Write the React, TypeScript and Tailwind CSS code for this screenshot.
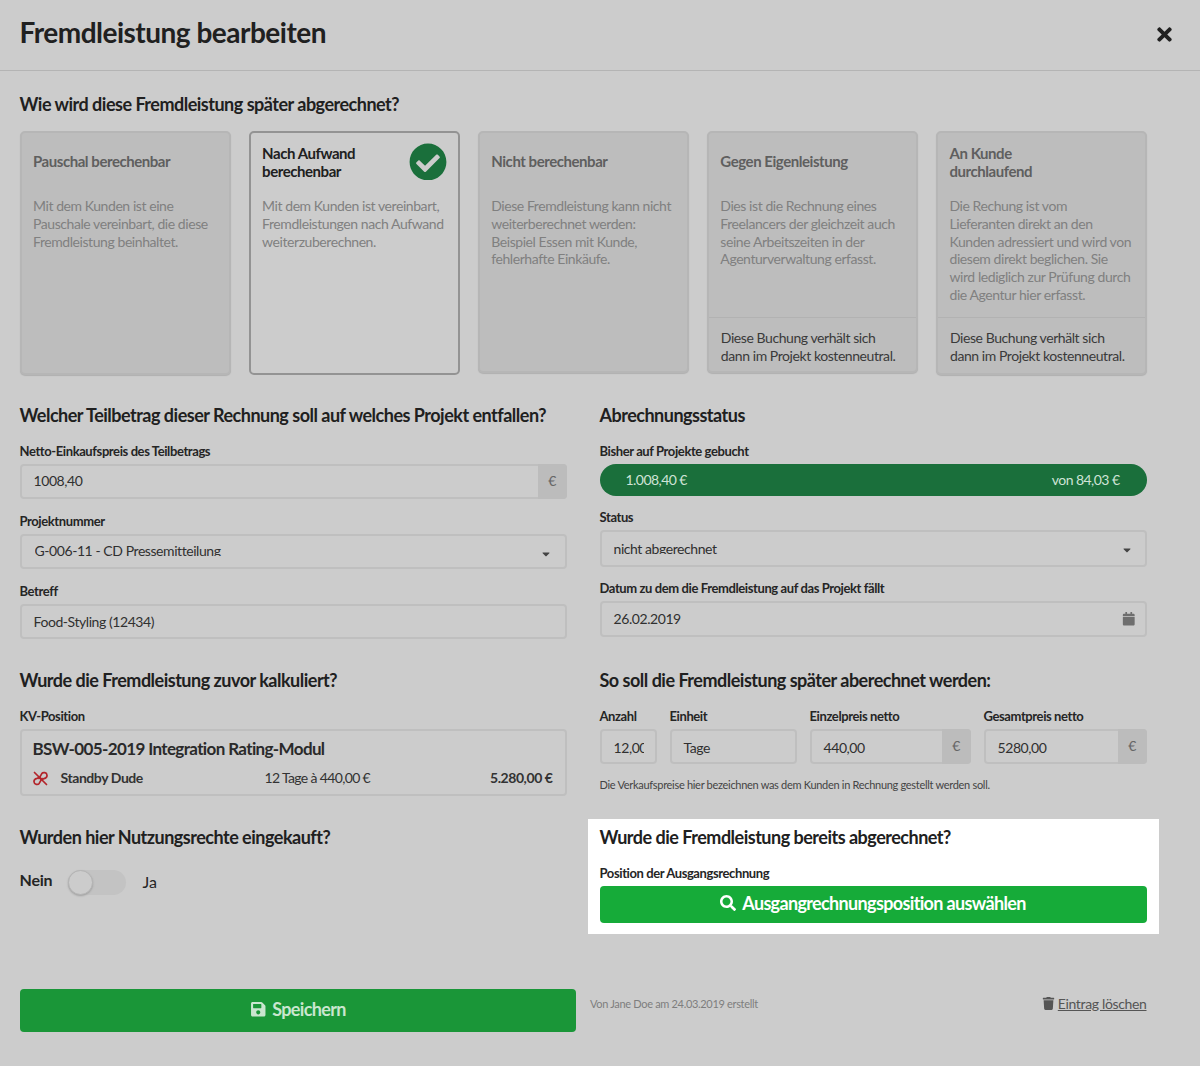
import React from "react";
import { FaCheckCircle, FaTimes, FaSearch, FaSave, FaTrash, FaCalendar, FaCaretDown } from "react-icons/fa";

const H = ({ children }: { children: React.ReactNode }) => (
  <h2 className="h-[24px] text-[18px] leading-[24px] font-bold text-[#202020] tracking-[-0.5px] whitespace-nowrap">{children}</h2>
);
const L = ({ children, className = "" }: { children: React.ReactNode; className?: string }) => (
  <div className={`h-[16px] text-[13px] leading-[16px] font-bold text-[#252525] tracking-[-0.4px] whitespace-nowrap ${className}`}>{children}</div>
);
const Field = ({ children, className = "" }: { children: React.ReactNode; className?: string }) => (
  <div className={`flex items-center rounded-[4px] border-2 border-[#bfbfbf] bg-[#cccccc] text-[14px] text-[#303030] tracking-[-0.43px] ${className}`}>{children}</div>
);
const Addon = () => (
  <div className="w-[29px] -my-[2px] -mr-[2px] self-stretch shrink-0 rounded-r-[4px] bg-[#bcbcbc] text-[#666] flex items-center justify-center text-[14px] h-[35px] pb-[2px]">€</div>
);
const BrokenLink = () => (
  <svg width="15" height="15" viewBox="0 0 15 15" fill="none" stroke="#b3252b" strokeWidth="1.7" strokeLinecap="round" className="shrink-0">
    <path d="M1.5 1.5 L13.5 13.5" />
    <path d="M6 7.5 L8.8 2.6 C10 0.9 13.8 1.2 14 4.2 C14.1 5.8 12.8 7.2 11 7.6 L8 8.8" />
    <path d="M9 7.5 L6.2 12.4 C5 14.1 1.2 13.8 1 10.8 C0.9 9.2 2.2 7.8 4 7.4 L7 6.2" />
  </svg>
);

type CardT = { t: string; d: string[]; f?: string[]; two?: boolean; active?: boolean; short?: boolean };
const cards: CardT[] = [
  { t: "Pauschal berechenbar", d: ["Mit dem Kunden ist eine", "Pauschale vereinbart, die diese", "Fremdleistung beinhaltet."] },
  { t: "Nach Aufwand\nberechenbar", two: true, active: true, d: ["Mit dem Kunden ist vereinbart,", "Fremdleistungen nach Aufwand", "weiterzuberechnen."] },
  { t: "Nicht berechenbar", short: true, d: ["Diese Fremdleistung kann nicht", "weiterberechnet werden:", "Beispiel Essen mit Kunde,", "fehlerhafte Einkäufe."] },
  { t: "Gegen Eigenleistung", short: true, d: ["Dies ist die Rechnung eines", "Freelancers der gleichzeit auch", "seine Arbeitszeiten in der", "Agenturverwaltung erfasst."], f: ["Diese Buchung verhält sich", "dann im Projekt kostenneutral."] },
  { t: "An Kunde\ndurchlaufend", two: true, d: ["Die Rechung ist vom", "Lieferanten direkt an den", "Kunden adressiert und wird von", "diesem direkt beglichen. Sie", "wird lediglich zur Prüfung durch", "die Agentur hier erfasst."], f: ["Diese Buchung verhält sich", "dann im Projekt kostenneutral."] },
];

function Card({ c }: { c: CardT }) {
  return (
    <div className={`relative rounded-[5px] border-2 flex flex-col tracking-[-0.43px] ${c.short ? "h-[242.5px]" : "h-[244px]"} ${c.active ? "bg-[#cccccc] border-[#939393]" : "bg-[#bdbdbd] border-[#b6b6b6] shadow-[0_1px_1px_#b0b0b0]"}`}>
      <div className="flex-1 pl-[11.5px] pt-[11.5px]">
        <div className={`h-[36px] flex items-center text-[15px] leading-[18px] font-bold whitespace-pre-line tracking-[-0.45px] ${c.two ? "" : "pb-[2px]"} ${c.active ? "text-[#202020]" : "text-[#5f5f5f]"}`}>{c.t}</div>
        <div className="mt-[17px] text-[14px] leading-[17.8px] text-[#808080]">
          {c.d.map((x) => <div key={x} className="whitespace-nowrap">{x}</div>)}
        </div>
      </div>
      {c.f && (
        <div className={`${c.short ? "h-[54.5px]" : "h-[56px]"} border-t border-[#b2b2b2] pl-[12px] pt-[11.5px] text-[14px] leading-[17.8px] text-[#3a3a3a] whitespace-nowrap`}>
          {c.f.map((x) => <div key={x}>{x}</div>)}
        </div>
      )}
      {c.active && (
        <div className="absolute left-[158px] top-[10.5px] w-[38px] h-[37px] overflow-hidden text-[#1a6f3b]">
          <FaCheckCircle size={38} />
        </div>
      )}
    </div>
  );
}

export default function App() {
  return (
    <div className="w-[1200px] h-[1066px] bg-[#cccccc] text-[#202020] overflow-hidden" style={{ fontFamily: "Lato, sans-serif" }}>
      <header className="h-[71px] border-b border-[#b4b4b4] flex items-center justify-between pl-[19.5px] pr-[25px] pb-[6px]">
        <h1 className="text-[28px] leading-[34px] font-bold text-[#202020] tracking-[-0.5px]">Fremdleistung bearbeiten</h1>
        <FaTimes size={21} className="text-[#202020] mt-[5px]" />
      </header>
      <div className="pl-[19.5px] pr-[53.5px]">
        <div className="pt-[21px]"><H>Wie wird diese Fremdleistung später abgerechnet?</H></div>
        <div className="mt-[14.5px] -mr-[1px] grid grid-cols-5 gap-x-[17.6px] items-start">
          {cards.map((c) => <Card key={c.t} c={c} />)}
        </div>

        <div className="mt-[28.5px] grid grid-cols-2 gap-x-[33px]">
          <div>
            <H>Welcher Teilbetrag dieser Rechnung soll auf welches Projekt entfallen?</H>
            <L className="mt-[16px]">Netto-Einkaufspreis des Teilbetrags</L>
            <Field className="mt-[5px] h-[35px] pl-[12px]"><span className="flex-1 mb-[2px]">1008,40</span><Addon /></Field>
            <L className="mt-[14px]">Projektnummer</L>
            <Field className="mt-[5px] h-[35px] pl-[13px] pr-[13px]">
              <span className="flex-1 h-[14px] mb-[5px] leading-[18px] overflow-hidden">G-006-11 - CD Pressemitteilung</span>
              <FaCaretDown size={12} className="text-[#444] mt-[4px]" />
            </Field>
            <L className="mt-[14px]">Betreff</L>
            <Field className="mt-[5px] h-[35px] pl-[12px]"><span>Food-Styling (12434)</span></Field>
          </div>
          <div>
            <H>Abrechnungsstatus</H>
            <L className="mt-[16px]">Bisher auf Projekte gebucht</L>
            <div className="mt-[5px] h-[32px] pb-[2px] rounded-full bg-[#1a6f3b] flex items-center justify-between pl-[26px] pr-[27px] text-[14px] text-[#cfe3d6] tracking-[-0.55px]">
              <span>1.008,40 €</span><span>von 84,03 €</span>
            </div>
            <L className="mt-[13px]">Status</L>
            <Field className="mt-[5px] h-[37px] pl-[12px] pr-[12px]">
              <span className="flex-1 h-[14px] mb-[4px] leading-[18px] overflow-hidden">nicht abgerechnet</span>
              <FaCaretDown size={12} className="text-[#444] mt-[3px]" />
            </Field>
            <L className="mt-[13px]">Datum zu dem die Fremdleistung auf das Projekt fällt</L>
            <Field className="mt-[5px] h-[36px] pl-[12px] pr-[9.5px]">
              <span className="flex-1 mb-[2px]">26.02.2019</span>
              <FaCalendar size={13.5} className="text-[#6e6e6e]" />
            </Field>
          </div>
        </div>

        <div className="mt-[29px] grid grid-cols-2 gap-x-[33px]">
          <div>
            <H>Wurde die Fremdleistung zuvor kalkuliert?</H>
            <L className="mt-[16px]">KV-Position</L>
            <div className="mt-[5px] h-[67px] rounded-[4px] border-2 border-[#bfbfbf] pl-[11px] pr-[12px] pt-[6px] tracking-[-0.43px]">
              <div className="text-[17px] leading-[24px] font-bold text-[#2a2a2a] tracking-[-0.63px]">BSW-005-2019 Integration Rating-Modul</div>
              <div className="mt-[8px] flex items-center text-[14px] leading-[18px] text-[#333]">
                <BrokenLink />
                <span className="ml-[13px] w-[204px] font-bold">Standby Dude</span>
                <span className="flex-1 tracking-[-0.65px]">12 Tage à 440,00 €</span>
                <span className="font-bold">5.280,00 €</span>
              </div>
            </div>
          </div>
          <div>
            <H>So soll die Fremdleistung später aberechnet werden:</H>
            <div className="mt-[16px] flex gap-x-[13px]">
              <div className="w-[57px]"><L>Anzahl</L>
                <Field className="mt-[5px] h-[35px] pl-[12px] pr-[11px]"><span className="w-[30px] mt-[1px] overflow-hidden whitespace-nowrap">12,00</span></Field>
              </div>
              <div className="w-[127px]"><L>Einheit</L>
                <Field className="mt-[5px] h-[35px] pl-[12px]"><span className="mt-[1px]">Tage</span></Field>
              </div>
              <div className="w-[161px]"><L>Einzelpreis netto</L>
                <Field className="mt-[5px] h-[35px] pl-[12px]"><span className="flex-1 mt-[1px]">440,00</span><Addon /></Field>
              </div>
              <div className="flex-1"><L>Gesamtpreis netto</L>
                <Field className="mt-[5px] h-[35px] pl-[12px]"><span className="flex-1 mt-[1px]">5280,00</span><Addon /></Field>
              </div>
            </div>
            <p className="mt-[13px] h-[16px] text-[11px] leading-[16px] text-[#444] whitespace-nowrap tracking-[-0.3px]">Die Verkaufspreise hier bezeichnen was dem Kunden in Rechnung gestellt werden soll.</p>
          </div>
        </div>

        <div className="mt-[23px] grid grid-cols-2 gap-x-[33px]">
          <div className="pt-[6px]">
            <H>Wurden hier Nutzungsrechte eingekauft?</H>
            <div className="mt-[19px] flex items-center text-[16px] text-[#252525]">
              <span className="font-bold w-[48px] mb-[4px] tracking-[-0.2px]">Nein</span>
              <span className="w-[58px] h-[25px] rounded-full bg-[#c3c3c3] relative">
                <span className="absolute left-0 top-0 w-[25px] h-[25px] rounded-full bg-[#cccccc] border border-[#b4b4b4] shadow-[0_1px_2px_#a0a0a0]" />
              </span>
              <span className="ml-[17px] mb-[1px]">Ja</span>
            </div>
          </div>
          <div className="-mx-[12px] px-[12px] pt-[6px] h-[115px] bg-white">
            <H>Wurde die Fremdleistung bereits abgerechnet?</H>
            <L className="mt-[16px]">Position der Ausgangsrechnung</L>
            <button className="mt-[5px] w-full h-[36.5px] pb-[2px] rounded-[4px] bg-[#16ab39] text-white text-[18px] font-bold tracking-[-0.65px] flex items-center justify-center gap-[6px]">
              <FaSearch size={16} /><span>Ausgangrechnungsposition auswählen</span>
            </button>
          </div>
        </div>

        <div className="mt-[55px] flex items-center">
          <button className="w-[556.5px] h-[43px] pb-[2px] rounded-[4px] bg-[#1a9638] text-[#c9e6cf] text-[18px] font-bold tracking-[-0.65px] flex items-center justify-center gap-[6px]">
            <FaSave size={16.5} /><span>Speichern</span>
          </button>
          <span className="ml-[14px] mb-[13px] text-[11px] text-[#7e7e7e] tracking-[-0.32px]">Von Jane Doe am 24.03.2019 erstellt</span>
          <a className="ml-auto mb-[15px] flex items-center text-[14px] text-[#555] tracking-[-0.35px]">
            <FaTrash size={13} className="mr-[3px]" /><span className="underline">Eintrag löschen</span>
          </a>
        </div>
      </div>
    </div>
  );
}
